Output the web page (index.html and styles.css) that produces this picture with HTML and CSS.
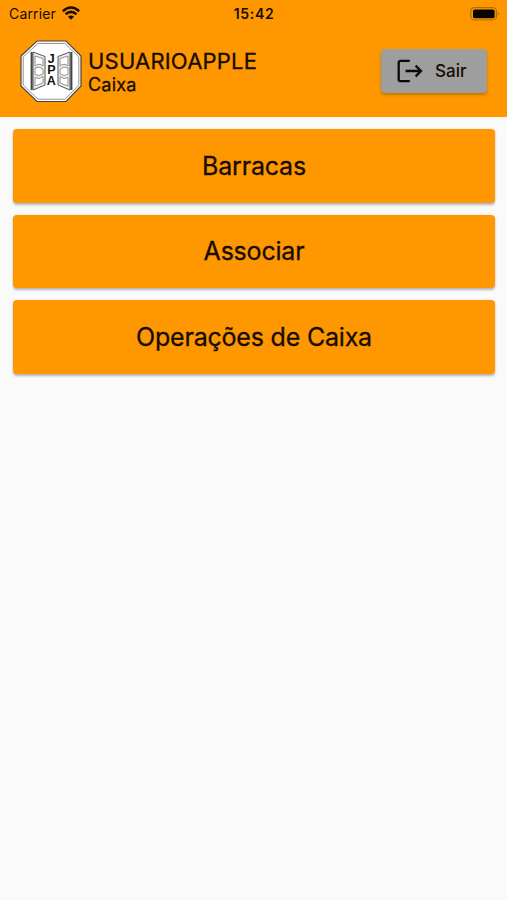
FILE: index.html
```html
<!DOCTYPE html>
<html lang="pt">
<head>
<meta charset="utf-8">
<title>Caixa</title>
<link rel="stylesheet" href="styles.css">
</head>
<body>
<header class="header">
  <div class="status">
    <div class="carrier"><span>Carrier</span>
      <svg class="wifi" width="18" height="14" viewBox="0 0 18 14" fill="none" stroke="#160c00" stroke-width="2.6"><path d="M.8 5.2Q9-2.2 17.2 5.2M3.6 8.3Q9 3.6 14.4 8.3"/><path d="M6 10.7Q9 8.2 12 10.7L9 13.8Z" fill="#160c00" stroke="none"/></svg>
    </div>
    <span class="time">15:42</span>
    <svg class="battery" width="30" height="14" viewBox="0 0 30 14"><rect x=".8" y=".6" width="25.6" height="12.4" rx="3.6" fill="none" stroke="#b06c05" stroke-width="1.2"/><rect x="3" y="2.6" width="21.6" height="8.6" rx="1.6" fill="#080400"/><path d="M27.8 4.5Q30 6.7 27.8 8.9Z" fill="#a56608"/></svg>
  </div>
  <div class="bar">
    <svg class="logo" width="62" height="63" viewBox="0 0 62 63">
      <path d="M17 1H46L61 16V46L46 61.5H17L1 46V16Z" fill="#fff" stroke="#4a4640" stroke-width="1.2"/>
      <path d="M18 3.4H45L58.8 17V45L45 59.2H18L3.2 45V17Z" fill="none" stroke="#777" stroke-width=".8"/>
      <g id="door" stroke="#555" fill="#eee">
        <path d="M13 12L25 16.5V45L13 50Z" stroke-width="1"/>
        <path d="M15 16L23 18.5V26Q19 22.5 15 26ZM15 28L19 27L23 29V34L19 35.5L15 34.5ZM15 37.5Q19 40 23 36.5V43L15 46Z" fill="#fff" stroke="#888" stroke-width=".9"/>
        <path d="M11.6 12V50" stroke="#444" stroke-width="2"/>
      </g>
      <use href="#door" transform="matrix(-1 0 0 1 63 0)"/>
      <g class="logo-text"><text x="31.3" y="23">J</text><text x="31.3" y="33.9">P</text><text x="31.3" y="45">A</text></g>
    </svg>
    <div class="user"><div class="name">USUARIOAPPLE</div><div class="role">Caixa</div></div>
    <button class="exit">
      <svg width="26" height="24" viewBox="0 0 26 24" fill="none" stroke="#0b0b0b" stroke-width="2.3"><path d="M12.8 1.8H3.7Q1.7 1.8 1.7 3.8V20.2Q1.7 22.2 3.7 22.2H12.8M8.5 12H24M18.6 6.6L24 12L18.6 17.4"/></svg>
      <span>Sair</span>
    </button>
  </div>
</header>
<main class="menu">
  <button class="item">Barracas</button>
  <button class="item">Associar</button>
  <button class="item">Operações de Caixa</button>
</main>
</body>
</html>
```
FILE: styles.css
```css
* { box-sizing: border-box; }
body { margin: 0; min-height: 900px; background: #fafafa; color: #160c00; font-family: Inter, "Liberation Sans", sans-serif; }
button { border: 0; padding: 0; font: inherit; color: inherit; }
.header { height: 117px; background: #ff9800; }
.status { height: 28px; display: grid; grid-template-columns: 1fr auto 1fr; align-items: center; padding: 0 7px 0 9px; }
.carrier { display: flex; align-items: center; gap: 6px; font-size: 14px; line-height: 28px; letter-spacing: .15px; }
.wifi { margin-top: -2px; }
.time { margin: -2px 1px 0 0; font-size: 14px; font-weight: 600; letter-spacing: .7px; }
.battery { justify-self: end; margin-top: -1px; }
.bar { display: flex; align-items: flex-start; padding: 12px 20px 0; }
.logo { flex: none; }
.logo-text { font: bold 12.5px "Liberation Sans", sans-serif; text-anchor: middle; fill: #111; }
.user { margin-left: 6px; padding-top: 7px; -webkit-text-stroke: .3px #160c00; }
.name { font-size: 22px; line-height: 28px; letter-spacing: .2px; }
.role { font-size: 18px; line-height: 19px; letter-spacing: .2px; }
.exit { display: flex; align-items: center; width: 106px; height: 44px; margin: 9px 0 0 auto; padding-left: 16px; border-radius: 4px; background: #9e9e9e; box-shadow: 0 2px 3px rgba(0,0,0,.24); font-size: 17px; font-weight: 500; }
.exit span { margin-left: 12px; }
.menu { display: grid; gap: 12px; padding: 12px 12px 0 13px; }
.item { height: 73.6px; border-radius: 4px; background: #ff9800; box-shadow: 0 1.5px 2.5px rgba(0,0,0,.28); font-size: 25px; letter-spacing: -.2px; -webkit-text-stroke: .3px #160c00; }
```
